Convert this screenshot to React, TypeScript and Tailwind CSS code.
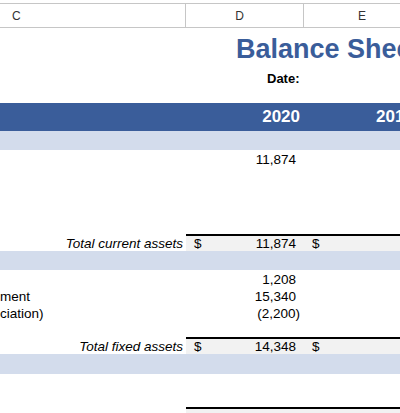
const font = { fontFamily: '"Liberation Sans", Arial, sans-serif' }

function Row({ h = 17, c, d, e, bg = "", total = false }: { h?: number; c?: React.ReactNode; d?: React.ReactNode; e?: React.ReactNode; bg?: string; total?: boolean }) {
  return (
    <div className={`grid grid-cols-[186px_118px_1fr] text-[13.5px] text-black ${bg}`} style={{ height: h }}>
      <div className="flex items-end justify-end pr-[3px] leading-none pb-[1px] whitespace-nowrap overflow-hidden">{c}</div>
      <div className={`flex items-end leading-none pb-[1px] ${total ? "border-t-2 border-black bg-[#f2f2f2]" : ""}`}>{d}</div>
      <div className={`flex items-end leading-none pb-[1px] ${total ? "border-t-2 border-black bg-[#f2f2f2]" : ""}`}>{e}</div>
    </div>
  )
}

function Num({ v, dollar = false, paren = false }: { v?: string; dollar?: boolean; paren?: boolean }) {
  return (
    <div className="flex w-full justify-between pl-[8px] pr-[4px]">
      <span>{dollar ? "$" : ""}</span>
      <span className={paren ? "" : "pr-[4px]"}>{v}</span>
    </div>
  )
}

export default function App() {
  return (
    <div className="w-[400px] h-[413px] bg-white overflow-hidden" style={font}>
      <div className="h-[3px]" />
      <div className="grid grid-cols-[186px_118px_1fr] h-[25px] border-y border-[#c6c6c6] text-[12px] text-[#333]">
        <div className="flex items-center pl-[12px] border-r border-[#c6c6c6]">C</div>
        <div className="flex items-center justify-center border-r border-[#c6c6c6] pr-[10px]">D</div>
        <div className="flex items-center pl-[54px]">E</div>
      </div>
      <div className="h-[35px] pl-[236px] flex items-end whitespace-nowrap">
        <span className="text-[27px] font-bold text-[#3a5d9a] leading-none">Balance Sheet</span>
      </div>
      <div className="h-[40px] pl-[267px] pt-[9px] text-[13px] font-bold leading-none">Date:</div>
      <div className="grid grid-cols-[186px_118px_1fr] h-[28px] bg-[#3a5d9a] text-white text-[17px] font-bold">
        <div />
        <div className="flex items-center justify-end pr-[4px]">2020</div>
        <div className="flex items-center pl-[72px] whitespace-nowrap">2019</div>
      </div>
      <div className="h-[19px] bg-[#d3dcec]" />
      <Row h={17} d={<Num v="11,874" />} />
      <Row />
      <Row />
      <Row />
      <Row h={16} />
      <Row h={17} total c={<i>Total current assets</i>} d={<Num v="11,874" dollar />} e={<Num dollar />} />
      <div className="h-[19px] bg-[#d3dcec]" />
      <Row d={<Num v="1,208" />} />
      <div className="grid grid-cols-[186px_118px_1fr] text-[13.5px] h-[17px]">
        <div className="flex items-end leading-none pb-[1px]">ment</div>
        <div className="flex items-end leading-none pb-[1px]"><Num v="15,340" /></div>
        <div />
      </div>
      <div className="grid grid-cols-[186px_118px_1fr] text-[13.5px] h-[17px]">
        <div className="flex items-end leading-none pb-[1px]">ciation)</div>
        <div className="flex items-end leading-none pb-[1px]"><Num v="(2,200)" paren /></div>
        <div />
      </div>
      <Row h={16} />
      <Row total c={<i>Total fixed assets</i>} d={<Num v="14,348" dollar />} e={<Num dollar />} />
      <div className="h-[20px] bg-[#d3dcec]" />
      <Row h={17} />
      <Row h={16} />
      <Row h={17} total />
    </div>
  )
}
